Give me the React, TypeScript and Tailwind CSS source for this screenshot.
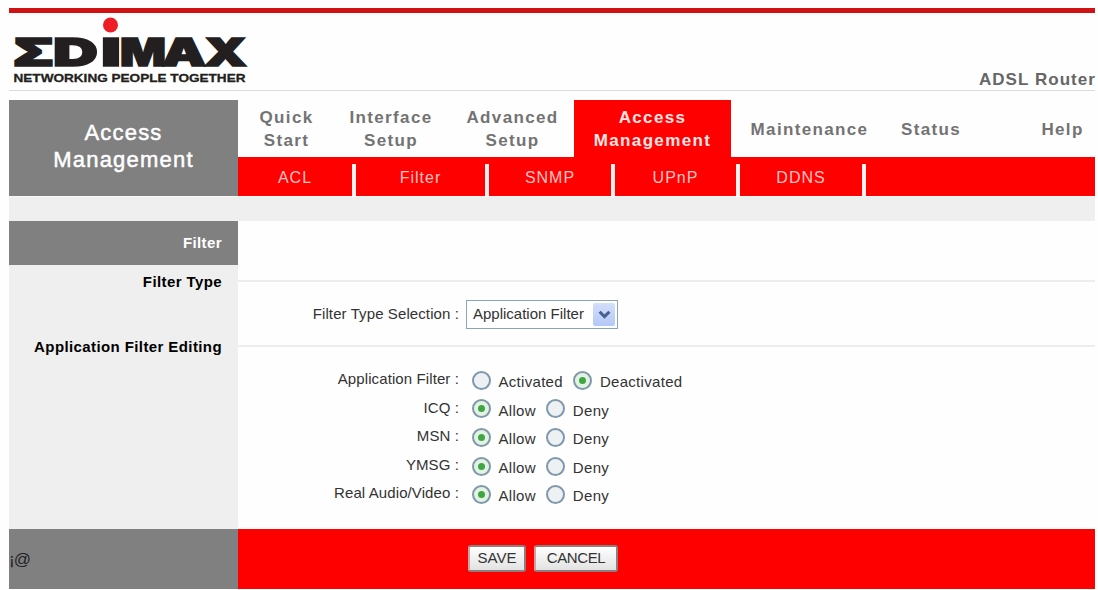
import clsx from "clsx";

const tabs = [
  { lines: ["Quick", "Start"], width: "w-[97px]" },
  { lines: ["Interface", "Setup"], width: "w-[112px]" },
  { lines: ["Advanced", "Setup"], width: "w-[127px] pl-1" },
  { lines: ["Access", "Management"], width: "w-[157px]", active: true },
  { lines: ["Maintenance"], width: "w-[157px]" },
  { lines: ["Status"], width: "w-[86px]" },
  { lines: ["Help"], width: "w-[121px] pl-[56px]" },
];

const subTabs = [
  { label: "ACL", width: "w-[118px]" },
  { label: "Filter", width: "w-[133px]" },
  { label: "SNMP", width: "w-[126px]" },
  { label: "UPnP", width: "w-[125px]" },
  { label: "DDNS", width: "w-[126px]" },
];

const rules = [
  { label: "Application Filter", options: ["Activated", "Deactivated"], selected: 1 },
  { label: "ICQ", options: ["Allow", "Deny"], selected: 0 },
  { label: "MSN", options: ["Allow", "Deny"], selected: 0 },
  { label: "YMSG", options: ["Allow", "Deny"], selected: 0 },
  { label: "Real Audio/Video", options: ["Allow", "Deny"], selected: 0 },
];

const logoLetters = [
  { char: "Σ", x: 4, width: 41 },
  { char: "D", x: 44, width: 45 },
  { char: "I", x: 92, width: 20 },
  { char: "M", x: 111, width: 46 },
  { char: "A", x: 153, width: 44 },
  { char: "X", x: 195, width: 43 },
];

function Logo() {
  return (
    <svg width="245" height="75" viewBox="0 0 245 75" fontWeight="bold" fill="#231f20">
      {logoLetters.map((l) => (
        <text
          key={l.char}
          x={l.x}
          y="52.5"
          fontFamily="Inter, sans-serif"
          fontWeight="900"
          fontSize="38"
          textLength={l.width}
          lengthAdjust="spacingAndGlyphs"
          stroke="#231f20"
          strokeWidth="1.5"
        >
          {l.char}
        </text>
      ))}
      <circle cx="101.5" cy="12" r="7.5" fill="#ee1c25" />
      <text
        x="4.5"
        y="68.5"
        fontFamily="'Liberation Sans', sans-serif"
        fontSize="11.5"
        textLength="232"
        lengthAdjust="spacingAndGlyphs"
        stroke="#231f20"
        strokeWidth="0.3"
      >
        NETWORKING PEOPLE TOGETHER
      </text>
    </svg>
  );
}

function Radio({ checked }: { checked: boolean }) {
  return (
    <span
      className={clsx(
        "flex size-[19px] shrink-0 items-center justify-center rounded-full border-2 border-[#7f98ac]",
        checked ? "bg-[#e3f3e3]" : "bg-[#eef1f3]"
      )}
    >
      {checked && <span className="size-[7px] rounded-full bg-[#3fa545]" />}
    </span>
  );
}

export default function App() {
  return (
    <div className="h-[590px] w-[1098px] overflow-hidden bg-[#fefefe] pl-[9px] pr-[3px] pt-2 font-['Liberation_Sans',Arial,sans-serif] text-[15px] text-[#333]">
      {/* Header */}
      <header className="flex h-[83px] items-start justify-between border-b border-[#dcdcdc] border-t-[5px] border-t-[#d01214]">
        <Logo />
        <div className="-mr-px mt-[54px] whitespace-nowrap text-[17px] font-bold tracking-[1.05px] text-[#666]">
          ADSL Router
        </div>
      </header>

      {/* Navigation */}
      <div className="mt-[9px] flex h-24">
        <div className="flex w-[229px] items-center justify-center bg-[#808080] pb-1 text-center text-[22px] leading-[27px] tracking-[1.2px] text-white [-webkit-text-stroke:0.5px_white]">
          <div>
            Access
            <br />
            Management
          </div>
        </div>
        <div className="flex-1">
          <nav className="flex h-[57px] text-center text-[17px] font-bold leading-[23px] tracking-[1.35px] text-[#737373]">
            {tabs.map((tab) => (
              <div
                key={tab.lines.join(" ")}
                className={clsx(
                  "flex shrink-0 flex-col justify-center pt-px",
                  tab.width,
                  tab.active && "bg-[#fe0000] text-[#ffe4e4]"
                )}
              >
                {tab.lines.map((line) => (
                  <span key={line}>{line}</span>
                ))}
              </div>
            ))}
          </nav>
          <div className="flex h-[39px] bg-[#fe0000] pt-[7px] text-[16px] tracking-[1px] text-[#ffc4c4]">
            {subTabs.map((tab) => (
              <div
                key={tab.label}
                className={clsx(
                  "flex items-center justify-center border-r-4 border-[#fff0f0] pb-1",
                  tab.width
                )}
              >
                {tab.label}
              </div>
            ))}
          </div>
        </div>
      </div>
      <div className="h-[25px] border-t border-[#f8f8f8] bg-[#efefef]" />

      {/* Body */}
      <div className="flex h-[308px]">
        <aside className="w-[229px] bg-[#efefef] text-right font-bold tracking-[0.4px] text-black">
          <div className="h-11 bg-[#808080] pr-4 leading-[44px] text-white">Filter</div>
          <div className="h-[65px] pr-4 pt-[5px] leading-6">Filter Type</div>
          <div className="pr-4 pt-[5px] leading-6">Application Filter Editing</div>
        </aside>
        <main className="flex-1">
          <div className="h-[61px] border-b-2 border-[#ededed]" />
          <div className="flex h-[65px] items-center border-b-2 border-[#ededed] pt-0.5">
            <div className="w-[221px] text-right tracking-[0.1px]">Filter Type Selection :</div>
            <div className="ml-[7px] flex h-[29px] w-[152px] items-center justify-between border-[1.5px] border-[#8ba3bb] bg-white pl-[6px] pr-0.5">
              <span>Application Filter</span>
              <span className="flex h-[23px] w-[22px] items-center justify-center rounded-[2px] bg-linear-to-b from-[#d3defb] to-[#b4c8f6]">
                <svg width="13" height="10" viewBox="0 0 12 9" fill="none">
                  <path d="M1.5 1.5 6 6l4.5-4.5" stroke="#465f91" strokeWidth="2.8" />
                </svg>
              </span>
            </div>
          </div>
          <div className="pt-[19px]">
            {rules.map((rule) => (
              <div key={rule.label} className="flex h-[28.6px] items-center">
                <div className="w-[221px] -translate-y-px text-right tracking-[0.1px]">
                  {rule.label} :
                </div>
                <div className="ml-[12.5px] flex items-center">
                  {rule.options.map((option, i) => (
                    <div key={option} className="mr-[10px] flex items-center">
                      <Radio checked={rule.selected === i} />
                      <span className="ml-2 translate-y-0.5 tracking-[0.3px]">{option}</span>
                    </div>
                  ))}
                </div>
              </div>
            ))}
          </div>
        </main>
      </div>

      {/* Footer */}
      <footer className="flex h-[60px]">
        <div className="flex w-[229px] items-center bg-[#808080] pt-0.5 text-[17px] text-[#222]">
          <span className="tracking-[-1px]">¡@</span>
        </div>
        <div className="flex flex-1 items-start gap-2 bg-[#fe0000] pl-[230px] pt-4 text-[15px]">
          <button className="h-[27px] w-[58px] rounded-[3px] border-2 border-[#8c7f7f] border-l-[#c9a5a5] bg-linear-to-b from-white to-[#e2e2e2]">
            SAVE
          </button>
          <button className="h-[27px] w-[84px] rounded-[3px] border-2 border-[#8c7f7f] border-l-[#c9a5a5] bg-linear-to-b from-white to-[#e2e2e2] tracking-[-0.4px]">
            CANCEL
          </button>
        </div>
      </footer>
    </div>
  );
}
